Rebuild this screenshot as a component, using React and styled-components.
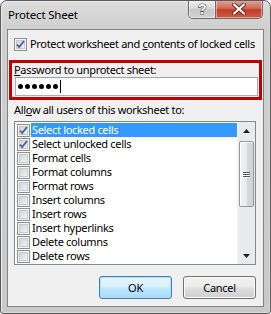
import React from "react";
import styled, { createGlobalStyle } from "styled-components";

const Global = createGlobalStyle`
  html, body { margin: 0; padding: 0; background: #fff; }
  body { font-family: "Noto Sans", "Liberation Sans", sans-serif; }
  #root { width: 271px; height: 314px; overflow: hidden; }
`;

const FONT = `"Noto Sans", "Liberation Sans", sans-serif`;

const Window = styled.div`
  box-sizing: border-box;
  width: 271px;
  height: 314px;
  border: 1px solid #5a5a5a;
  border-radius: 7px 7px 3px 3px;
  background: linear-gradient(#dcdcdc 0px, #cfcfcf 28px, #c9c9c9 100%);
  box-shadow: inset 1px 1px 0 #ececec, inset -1px -1px 0 #d8d8d8;
  padding: 0 6px 6px 6px;
  display: flex;
  flex-direction: column;
  font-family: ${FONT};
  font-size: 11px;
  letter-spacing: -0.32px;
  color: #000;
  overflow: hidden;
`;

const TitleBar = styled.div`
  height: 28px;
  display: flex;
  align-items: flex-start;
  justify-content: space-between;
`;

const TitleText = styled.div`
  margin-top: 6px;
  margin-left: 1px;
  line-height: 16px;
  font-size: 11.5px;
  letter-spacing: -0.2px;
`;

const Caption = styled.div`
  display: flex;
  margin-top: -1px;
  margin-right: 1px;
  border: 1px solid #6a6a6a;
  border-top: none;
  border-radius: 0 0 5px 5px;
  overflow: hidden;
  height: 18px;
`;

const CapButton = styled.div`
  width: ${(p) => p.$w}px;
  height: 18px;
  display: flex;
  align-items: center;
  justify-content: center;
  background: ${(p) =>
    p.$close
      ? "linear-gradient(#e4a699 0%, #d06b5a 45%, #c43e26 55%, #d5593f 100%)"
      : "linear-gradient(#f2f2f2 0%, #d9d9d9 45%, #c6c6c6 55%, #d2d2d2 100%)"};
  border-left: ${(p) => (p.$close ? "1px solid #6a6a6a" : "none")};
  box-shadow: inset 0 0 0 1px rgba(255, 255, 255, 0.45);
`;

const Client = styled.div`
  flex: 1;
  background: #f0f0f0;
  border: 1px solid #838383;
  display: flex;
  flex-direction: column;
  min-width: 0;
`;

const TopOption = styled.div`
  display: flex;
  align-items: center;
  height: 16px;
  margin-top: 6px;
  padding-left: 6px;
  gap: 3px;
  line-height: 16px;
  white-space: nowrap;
`;

const BoxWrap = styled.span`
  display: inline-flex;
  width: 13px;
  height: 13px;
  flex: none;
`;

const RedBox = styled.div`
  box-sizing: border-box;
  margin: 8px 1px 0 1px;
  height: 40px;
  border: 3px solid #c00000;
  display: flex;
  flex-direction: column;
`;

const FieldLabel = styled.div`
  padding-left: 2px;
  line-height: 13px;
  white-space: nowrap;
`;

const PasswordField = styled.div`
  box-sizing: border-box;
  margin: 1px 1px 0 3px;
  height: 19px;
  background: #fff;
  border: 1px solid #abadb3;
  border-top-color: #a0a2a8;
  display: flex;
  align-items: center;
  padding-left: 2px;
`;

const Dots = styled.span`
  display: flex;
  gap: 2px;
`;

const Dot = styled.span`
  width: 5px;
  height: 5px;
  border-radius: 50%;
  background: #000;
`;

const Caret = styled.span`
  width: 1px;
  height: 13px;
  background: #000;
  margin-left: 2px;
`;

const SectionLabel = styled.div`
  margin-top: 1px;
  padding-left: 6px;
  line-height: 18px;
  white-space: nowrap;
`;

const U = styled.span`
  text-decoration: underline;
  text-underline-offset: 1px;
`;

const ListBox = styled.div`
  box-sizing: border-box;
  margin: 2px 7px 0 6px;
  height: 144px;
  border: 1px solid #828790;
  background: #fff;
  display: flex;
  overflow: hidden;
`;

const Items = styled.div`
  flex: 1;
  min-width: 0;
  padding-top: 1px;
  display: flex;
  flex-direction: column;
`;

const Item = styled.div`
  display: flex;
  align-items: center;
  height: 14px;
  padding-left: 2px;
  white-space: nowrap;
  overflow: hidden;
`;

const ItemText = styled.span`
  flex: 1;
  min-width: 0;
  line-height: 14px;
  height: 14px;
  padding-left: 1px;
  margin-left: 1px;
  overflow: hidden;
  background: ${(p) => (p.$selected ? "#3399ff" : "transparent")};
  color: ${(p) => (p.$selected ? "#fff" : "#000")};
`;

const ScrollBar = styled.div`
  width: 17px;
  flex: none;
  background: #eaeaea;
  border-left: 1px solid #f4f4f4;
  display: flex;
  flex-direction: column;
  align-items: center;
`;

const Arrow = styled.div`
  width: 17px;
  height: 17px;
  display: flex;
  align-items: center;
  justify-content: center;
`;

const Spacer = styled.div`
  flex: 1;
`;

const Thumb = styled.div`
  box-sizing: border-box;
  width: 15px;
  height: 66px;
  margin-top: 2px;
  border: 1px solid #979797;
  border-radius: 2px;
  background: linear-gradient(90deg, #f3f3f3 0%, #e9e9e9 50%, #d9d9d9 51%, #d2d2d2 100%);
  box-shadow: inset 1px 1px 0 #fff;
  display: flex;
  flex-direction: column;
  align-items: center;
  justify-content: center;
  gap: 1px;
`;

const Grip = styled.span`
  width: 7px;
  height: 1px;
  background: #555;
  box-shadow: 0 1px 0 #fff;
`;

const Buttons = styled.div`
  display: flex;
  justify-content: flex-end;
  gap: 11px;
  margin-top: 11px;
  margin-right: 7px;
`;

const Button = styled.div`
  box-sizing: border-box;
  width: 73px;
  height: 23px;
  border: 1px solid ${(p) => (p.$default ? "#3c7fb1" : "#707070")};
  border-radius: 3px;
  background: ${(p) =>
    p.$default
      ? "linear-gradient(#eaf6fd 0%, #d9f0fc 45%, #bee6fd 55%, #a7d9f5 100%)"
      : "linear-gradient(#f2f2f2 0%, #ebebeb 45%, #dddddd 55%, #cfcfcf 100%)"};
  box-shadow: inset 0 0 0 1px ${(p) => (p.$default ? "#b0e0f8" : "#fcfcfc")};
  display: flex;
  align-items: center;
  justify-content: center;
  line-height: 14px;
`;

const CheckBox = ({ checked }) => (
  <BoxWrap>
    <svg width="13" height="13" viewBox="0 0 13 13">
      <defs>
        <linearGradient id="cbg" x1="0" y1="0" x2="1" y2="1">
          <stop offset="0" stopColor="#cbcfd5" />
          <stop offset="1" stopColor="#f6f6f6" />
        </linearGradient>
      </defs>
      <rect x="0.5" y="0.5" width="12" height="12" fill="#f4f4f4" stroke="#8e8f8f" />
      <rect x="2.5" y="2.5" width="8" height="8" fill="url(#cbg)" stroke="#c6c9ce" strokeWidth="1" />
      {checked && (
        <path d="M3 6.5 L5.2 9 L10 3" fill="none" stroke="#4a5f97" strokeWidth="1.8" />
      )}
    </svg>
  </BoxWrap>
);

const items = [
  ["Select locked cells", true, true],
  ["Select unlocked cells", true, false],
  ["Format cells", false, false],
  ["Format columns", false, false],
  ["Format rows", false, false],
  ["Insert columns", false, false],
  ["Insert rows", false, false],
  ["Insert hyperlinks", false, false],
  ["Delete columns", false, false],
  ["Delete rows", false, false],
];

export default function App() {
  return (
    <>
      <Global />
      <Window>
        <TitleBar>
          <TitleText>Protect Sheet</TitleText>
          <Caption>
            <CapButton $w={26}>
              <svg width="12" height="14" viewBox="0 0 12 14">
                <text x="6" y="12" textAnchor="middle" fontFamily="Liberation Sans, sans-serif" fontWeight="bold" fontSize="14" fill="#fff" stroke="#4a4a4a" strokeWidth="1.1" paintOrder="stroke">?</text>
              </svg>
            </CapButton>
            <CapButton $w={46} $close>
              <svg width="14" height="12" viewBox="0 0 14 12">
                <path d="M2 1.5 L12 10.5 M12 1.5 L2 10.5" stroke="#5a2a22" strokeWidth="4" strokeLinecap="round" />
                <path d="M2 1.5 L12 10.5 M12 1.5 L2 10.5" stroke="#fff" strokeWidth="2.2" strokeLinecap="round" />
              </svg>
            </CapButton>
          </Caption>
        </TitleBar>
        <Client>
          <TopOption>
            <CheckBox checked />
            <span>
              Protect worksheet and <U>c</U>ontents of locked cells
            </span>
          </TopOption>
          <RedBox>
            <FieldLabel>
              <U>P</U>assword to unprotect sheet:
            </FieldLabel>
            <PasswordField>
              <Dots>
                {[0, 1, 2, 3, 4, 5].map((i) => (
                  <Dot key={i} />
                ))}
              </Dots>
              <Caret />
            </PasswordField>
          </RedBox>
          <SectionLabel>
            All<U>o</U>w all users of this worksheet to:
          </SectionLabel>
          <ListBox>
            <Items>
              {items.map(([label, checked, selected]) => (
                <Item key={label}>
                  <CheckBox checked={checked} />
                  <ItemText $selected={selected}>{label}</ItemText>
                </Item>
              ))}
            </Items>
            <ScrollBar>
              <Arrow>
                <svg width="7" height="4" viewBox="0 0 7 4">
                  <path d="M0 4 L3.5 0 L7 4 Z" fill="#222" />
                </svg>
              </Arrow>
              <Thumb>
                <Grip />
                <Grip />
                <Grip />
              </Thumb>
              <Spacer />
              <Arrow>
                <svg width="7" height="4" viewBox="0 0 7 4">
                  <path d="M0 0 L7 0 L3.5 4 Z" fill="#222" />
                </svg>
              </Arrow>
            </ScrollBar>
          </ListBox>
          <Buttons>
            <Button $default>OK</Button>
            <Button>Cancel</Button>
          </Buttons>
        </Client>
      </Window>
    </>
  );
}
